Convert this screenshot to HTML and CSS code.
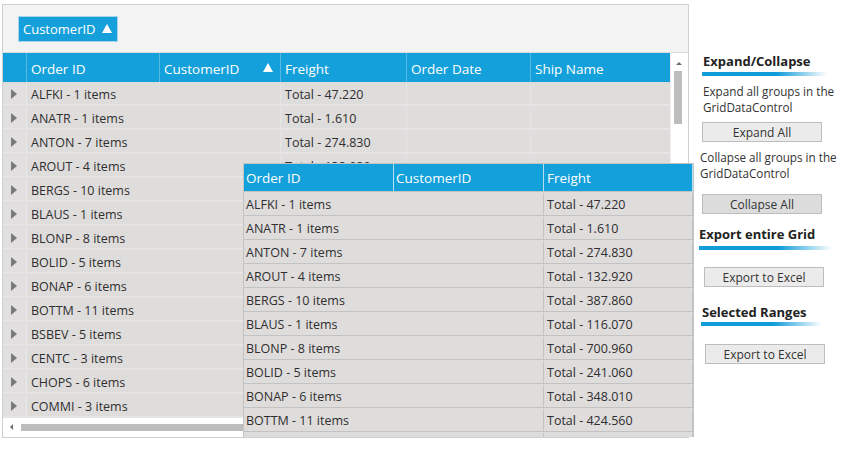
FILE: index.html
```html
<!DOCTYPE html>
<html>
<head>
<meta charset="utf-8">
<link rel="stylesheet" href="styles.css">
</head>
<body>
<div class="page">
  <div class="grid">
    <div class="groupbar">
      <div class="chip"><span>CustomerID</span><span class="tri-up"></span></div>
    </div>
    <div class="grid-main">
      <div class="table">
        <div class="hdr">
          <div class="c c-ind"></div>
          <div class="c c-oid">Order ID</div>
          <div class="c c-cid"><span>CustomerID</span><span class="tri-up"></span></div>
          <div class="c c-fr">Freight</div>
          <div class="c c-od">Order Date</div>
          <div class="c c-sn last">Ship Name</div>
        </div>
        <div class="rows" id="rows"></div>
      </div>
      <div class="vscroll">
        <div class="vs-arrow"></div>
        <div class="vs-thumb"></div>
      </div>
    </div>
    <div class="hscroll">
      <div class="hs-arrow"></div>
      <div class="hs-thumb"></div>
    </div>
  </div>

  <div class="popup">
    <div class="p-hdr">
      <div class="pc p-oid">Order ID</div>
      <div class="pc p-cid">CustomerID</div>
      <div class="pc p-fr">Freight</div>
    </div>
    <div class="p-rows" id="prows"></div>
  </div>

  <aside class="panel">
    <div class="title t1">Expand/Collapse</div>
    <div class="uline u1"></div>
    <div class="desc d1">Expand all groups in the<br>GridDataControl</div>
    <div class="btn b1">Expand All</div>
    <div class="desc d2">Collapse all groups in the<br>GridDataControl</div>
    <div class="btn b2 dark">Collapse All</div>
    <div class="title t2">Export entire Grid</div>
    <div class="uline u2"></div>
    <div class="btn b3">Export to Excel</div>
    <div class="title t3">Selected Ranges</div>
    <div class="uline u3"></div>
    <div class="btn b4">Export to Excel</div>
  </aside>
</div>
<script src="app.js"></script>
</body>
</html>
```

FILE: app.js
```js
var groups = [
  ["ALFKI", 1, "47.220"], ["ANATR", 1, "1.610"], ["ANTON", 7, "274.830"],
  ["AROUT", 4, "132.920"], ["BERGS", 10, "387.860"], ["BLAUS", 1, "116.070"],
  ["BLONP", 8, "700.960"], ["BOLID", 5, "241.060"], ["BONAP", 6, "348.010"],
  ["BOTTM", 11, "424.560"], ["BSBEV", 5, "108.040"], ["CENTC", 3, "3.250"],
  ["CHOPS", 6, "268.450"], ["COMMI", 3, "98.140"]
];
var rows = document.getElementById("rows");
groups.forEach(function (g) {
  var r = document.createElement("div");
  r.className = "row";
  r.innerHTML =
    '<div class="c c-ind"><span class="tri-right"></span></div>' +
    '<div class="c c-grp">' + g[0] + ' - ' + g[1] + ' items</div>' +
    '<div class="c c-fr">Total - ' + g[2] + '</div>' +
    '<div class="c c-od"></div>' +
    '<div class="c c-sn last"></div>';
  rows.appendChild(r);
});
var prows = document.getElementById("prows");
groups.slice(0, 10).forEach(function (g) {
  var r = document.createElement("div");
  r.className = "p-row";
  r.innerHTML =
    '<div class="pc p-grp">' + g[0] + ' - ' + g[1] + ' items</div>' +
    '<div class="pc p-fr">Total - ' + g[2] + '</div>';
  prows.appendChild(r);
});
var last = document.createElement("div");
last.className = "p-row";
last.innerHTML = '<div class="pc p-grp"></div><div class="pc p-fr"></div>';
prows.appendChild(last);
```

FILE: styles.css
```css
* { box-sizing: border-box; }
html, body { margin: 0; padding: 0; background: #fff; }
body {
  font-family: "Open Sans", "Noto Sans", sans-serif;
  font-size: 12.5px;
  color: #2f2f2f;
  width: 847px;
  height: 450px;
  overflow: hidden;
}
.page {
  position: relative;
  display: flex;
  padding: 4px 0 0 2px;
}
.grid {
  width: 687px;
  height: 434px;
  border: 1px solid #cfcfcf;
  display: flex;
  flex-direction: column;
  overflow: hidden;
}
.groupbar {
  height: 48px;
  flex: none;
  background: #f3f3f3;
  padding: 11px 0 0 15px;
  border-bottom: 1px solid #dcdcdc;
}
.chip {
  width: 100px;
  height: 26px;
  background: #15a0db;
  border: 1px solid #a9d3e8;
  color: #fff;
  font-size: 13px;
  display: flex;
  align-items: center;
  justify-content: space-between;
  padding: 0 5px 0 4px;
}
.tri-up {
  width: 0; height: 0;
  border-left: 5px solid transparent;
  border-right: 5px solid transparent;
  border-bottom: 9px solid #fff;
  margin-bottom: 2px;
}
.grid-main {
  display: flex;
  height: 365px;
  flex: none;
}
.table { width: 667px; }
.hdr {
  display: flex;
  height: 29px;
  background: #14a0da;
  color: #fff;
  font-size: 13.5px;
}
.hdr .c {
  border-right: 1px solid #55b9e4;
  display: flex;
  align-items: center;
  padding: 2px 0 0 4px;
}
.hdr .c.last { border-right: none; }
.hdr .c-cid { justify-content: space-between; padding-right: 7px; }
.c-ind { width: 24px; flex: none; }
.c-oid { width: 133px; flex: none; }
.c-cid { width: 121px; flex: none; }
.c-grp { width: 254px; flex: none; }
.c-fr { width: 126px; flex: none; }
.c-od { width: 124px; flex: none; }
.c-sn { width: 139px; flex: none; }
.rows { background: #fff; }
.row {
  display: flex;
  height: 24px;
  background: #dfdcdc;
  border-bottom: 2px solid #e6e4e4;
  padding-top: 2px;
}
.row .c {
  display: flex;
  align-items: center;
  border-right: 1px solid #e6e4e4;
  padding-left: 4px;
  white-space: nowrap;
}
.row .c.last { border-right: none; }
.row .c-ind {
  background: #e1dfdf;
  border-right: 1px solid #ebe9e9;
  padding-left: 8px;
}
.tri-right {
  width: 0; height: 0;
  border-top: 5px solid transparent;
  border-bottom: 5px solid transparent;
  border-left: 6px solid #7a7a7a;
}
.vscroll {
  width: 18px;
  background: #fff;
  border-left: 1px solid #f0f0f0;
  padding: 9px 0 0 3px;
}
.vs-arrow {
  width: 0; height: 0;
  border-left: 3px solid transparent;
  border-right: 3px solid transparent;
  border-bottom: 3px solid #6e6e6e;
  margin: 0 0 6px 2px;
}
.vs-thumb {
  width: 8px;
  height: 53px;
  background: #bdbdbd;
}
.hscroll {
  height: 18px;
  flex: none;
  background: #fff;
  display: flex;
  align-items: center;
  padding-left: 7px;
}
.hs-arrow {
  width: 0; height: 0;
  border-top: 3px solid transparent;
  border-bottom: 3px solid transparent;
  border-right: 3px solid #6e6e6e;
  margin-right: 8px;
}
.hs-thumb {
  width: 600px;
  height: 7px;
  background: #bdbdbd;
}

/* floating popup grid */
.popup {
  position: absolute;
  left: 243px;
  top: 163px;
  width: 451px;
  height: 274px;
  border: 1px solid #c3c3c3;
  border-bottom: none;
  background: #dfdcdc;
  overflow: hidden;
}
.p-hdr {
  display: flex;
  height: 28px;
  background: #14a0da;
  color: #fff;
  font-size: 13.5px;
  border-bottom: 1px solid #c3c3c3;
}
.pc {
  display: flex;
  align-items: center;
  padding-left: 2px;
  white-space: nowrap;
}
.p-hdr .pc { border-right: 1px solid #b5dff2; }
.p-oid { width: 150px; }
.p-cid { width: 150px; }
.p-fr { width: 149px; padding-left: 3px; }
.p-grp { width: 300px; border-right: 1px solid #c3c3c3; }
.p-row {
  display: flex;
  height: 24px;
  border-bottom: 1px solid #c3c3c3;
  padding-top: 1px;
}
.p-row .p-fr { border-right: 1px solid #c3c3c3; }

/* right panel */
.panel {
  width: 158px;
  flex: none;
  display: flex;
  flex-direction: column;
  align-items: flex-start;
  font-size: 12px;
  color: #333;
}
.title {
  font-weight: bold;
  font-size: 13px;
  color: #222;
  line-height: 18px;
  white-space: nowrap;
}
.uline {
  height: 4px;
  background: linear-gradient(to right, #129dd9 0%, #129dd9 60%, rgba(18,157,217,0) 100%);
}
.desc { line-height: 16px; white-space: nowrap; font-size: 11.7px; }
.btn {
  width: 120px;
  height: 20px;
  background: #ebebeb;
  border: 1px solid #bdbdbd;
  display: flex;
  align-items: center;
  justify-content: center;
  color: #333;
}
.btn.dark { background: #dcdcdc; }
.t1 { margin: 48px 0 0 14px; }
.u1 { width: 125px; margin: 2px 0 0 13px; }
.d1 { margin: 7px 0 0 14px; }
.b1 { margin: 7px 0 0 13px; }
.d2 { margin: 7px 0 0 11px; }
.b2 { margin: 13px 0 0 13px; }
.t2 { margin: 11px 0 0 10px; }
.u2 { width: 133px; margin: 3px 0 0 10px; }
.b3 { margin: 17px 0 0 15px; }
.t3 { margin: 16px 0 0 13px; }
.u3 { width: 121px; margin: 1px 0 0 12px; }
.b4 { margin: 18px 0 0 16px; }
```
